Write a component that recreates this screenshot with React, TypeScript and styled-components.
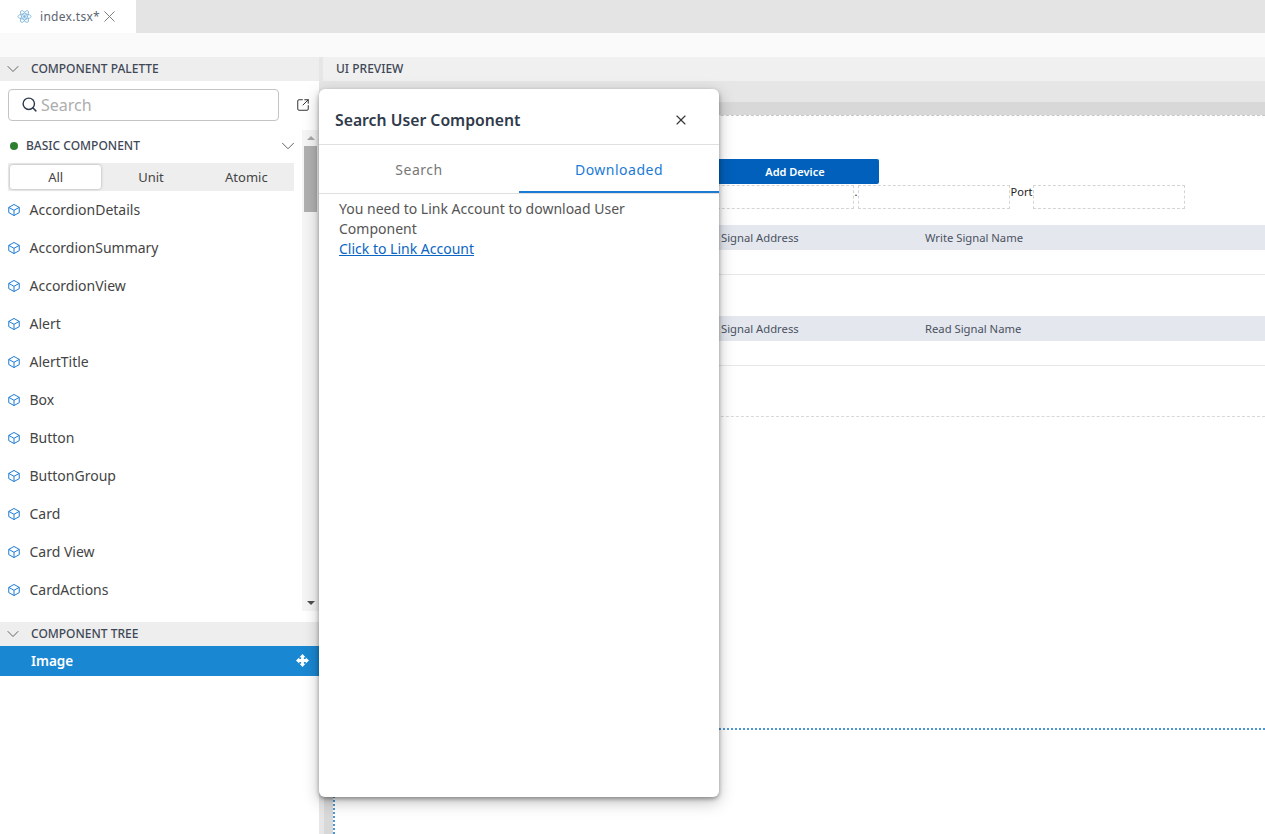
import styled, { createGlobalStyle } from "styled-components";
import { useState } from "react";
import { ChevronDown, Search, SquareArrowOutUpRight, X } from "lucide-react";

const GlobalStyle = createGlobalStyle`
  html, body {
    margin: 0;
    padding: 0;
    height: 100%;
    overflow: hidden;
    background: #fff;
    font-family: "Noto Sans", "Open Sans", sans-serif;
  }
  * { box-sizing: border-box; }
`;

const Page = styled.div`
  position: relative;
  width: 1265px;
  height: 834px;
  display: flex;
  flex-direction: column;
  overflow: hidden;
`;

const TabBar = styled.div`
  height: 33px;
  flex: none;
  display: flex;
  background: #e4e4e4;
`;

const FileTab = styled.div`
  width: 136px;
  display: flex;
  align-items: center;
  padding-left: 17px;
  gap: 8px;
  background: #fff;
  color: #5c6470;
  font-size: 12px;
  letter-spacing: 0.3px;
`;

const TabClose = styled(X)`
  margin-left: -8px;
  color: #777;
`;

const Toolbar = styled.div`
  height: 24px;
  flex: none;
  background: #fafafa;
`;

const Workspace = styled.div`
  flex: 1;
  min-height: 0;
  display: flex;
`;

const LeftColumn = styled.div`
  width: 319px;
  flex: none;
  display: flex;
  flex-direction: column;
`;

const SectionHeader = styled.div`
  height: 24px;
  flex: none;
  display: flex;
  align-items: center;
  gap: 8px;
  padding: 0 0 1px 3px;
  background: #eeeeee;
  color: #3f4856;
  font-size: 12px;
  font-weight: 500;
`;

const PalettePanel = styled.div`
  height: 554px;
  flex: none;
  display: flex;
  flex-direction: column;
`;

const SearchRow = styled.div`
  height: 49px;
  flex: none;
  display: flex;
  align-items: center;
  justify-content: space-between;
  padding: 0 9px 1px 8px;
`;

const SearchBox = styled.div`
  width: 271px;
  height: 32px;
  display: flex;
  align-items: center;
  gap: 3px;
  padding: 0 0 1px 12px;
  border: 1px solid #c4c4c4;
  border-radius: 4px;
  color: #adadad;
  font-size: 16px;
`;

const SearchGlyph = styled(Search)`
  color: #2e3a4a;
`;

const PaletteBody = styled.div`
  flex: 1;
  min-height: 0;
  display: flex;
`;

const PaletteMain = styled.div`
  width: 302px;
  flex: none;
  display: flex;
  flex-direction: column;
`;

const GroupRow = styled.div`
  height: 33px;
  flex: none;
  display: flex;
  align-items: center;
  padding: 0 3px 2px 10px;
  color: #3f4856;
  font-size: 12px;
  font-weight: 500;
`;

const GreenDot = styled.span`
  width: 8px;
  height: 8px;
  border-radius: 50%;
  background: #2e7d32;
  margin-right: 8px;
`;

const GroupChevron = styled(ChevronDown)`
  margin-left: auto;
  color: #555;
`;

const Segmented = styled.div`
  margin-left: 8px;
  width: 286px;
  height: 28px;
  flex: none;
  display: grid;
  grid-template-columns: repeat(3, 1fr);
  background: #eeeeee;
`;

const Segment = styled.button<{ $active?: boolean }>`
  margin: 2px;
  border: 0;
  padding: 0;
  border-radius: 3px;
  background: ${(p) => (p.$active ? "#fff" : "transparent")};
  box-shadow: ${(p) => (p.$active ? "0 0 3px rgba(0,0,0,0.3)" : "none")};
  color: #444;
  font: inherit;
  font-size: 13px;
`;

const ItemList = styled.div`
  flex: 1;
  min-height: 0;
  overflow: hidden;
`;

const Item = styled.div`
  height: 38px;
  display: flex;
  align-items: center;
  gap: 8.5px;
  padding: 0 0 1px 7px;
  color: #444;
  font-size: 14px;
`;

const ScrollTrack = styled.div`
  width: 17px;
  flex: none;
  display: flex;
  flex-direction: column;
  align-items: center;
  background: #f5f5f5;
`;

const ScrollArrow = styled.span<{ $up?: boolean }>`
  width: 0;
  height: 0;
  margin: 6px 0;
  border-left: 4px solid transparent;
  border-right: 4px solid transparent;
  ${(p) =>
    p.$up
      ? "border-bottom: 4px solid #a8a8a8;"
      : "border-top: 4px solid #505050;"}
`;

const ScrollThumb = styled.div`
  width: 13px;
  height: 66px;
  background: #b0b0b0;
`;

const ScrollGap = styled.div`
  flex: 1;
`;

const TreeHeader = styled(SectionHeader)`
  margin-top: 11px;
`;

const TreeRow = styled.div`
  height: 30px;
  flex: none;
  display: flex;
  align-items: center;
  justify-content: space-between;
  padding: 0 10px 1px 31px;
  background: #1a87d2;
  color: #fff;
  font-size: 13.5px;
  font-weight: 600;
`;

const Splitter = styled.div`
  width: 4px;
  flex: none;
  background: #e6e6e6;
`;

const RightColumn = styled.div`
  flex: 1;
  min-width: 0;
  display: flex;
  flex-direction: column;
`;

const PreviewHeader = styled.div`
  height: 24px;
  flex: none;
  display: flex;
  align-items: center;
  padding: 0 0 1px 13px;
  background: #f0f0f0;
  color: #3f4856;
  font-size: 12px;
  font-weight: 500;
`;

const GreyBand = styled.div`
  height: 21px;
  flex: none;
  background: #e6e6e6;
`;

const RulerBand = styled.div`
  height: 13px;
  flex: none;
  background: #d8d8d8;
`;

const CanvasRow = styled.div`
  flex: 1;
  min-height: 0;
  display: flex;
`;

const Gutter = styled.div`
  width: 10px;
  flex: none;
  background: linear-gradient(90deg, #e6e6e6 0 1px, #d8d8d8 1px);
`;

const Canvas = styled.div`
  flex: 1;
  min-width: 0;
  border-left: 2px dotted #4a97d8;
`;

const CanvasContent = styled.div`
  height: 615px;
  border-bottom: 2px dotted #4a97d8;
  display: flex;
  flex-direction: column;
`;

const DeviceFrame = styled.div`
  height: 302px;
  flex: none;
  padding-top: 43px;
  border-top: 1px dashed #c8c8c8;
  border-bottom: 1px dashed #d8d8d8;
  display: flex;
  flex-direction: column;
`;

const ButtonRow = styled.div`
  display: flex;
  padding-left: 376px;
`;

const AddButton = styled.button`
  width: 168px;
  height: 25px;
  border: 0;
  border-radius: 2px;
  background: #0060bb;
  color: #fff;
  font: inherit;
  font-size: 11px;
  font-weight: 600;
`;

const FieldRow = styled.div`
  margin-top: 1px;
  height: 24px;
  flex: none;
  display: flex;
  padding-left: 362px;
  color: #222;
  font-size: 11px;
`;

const Field = styled.div<{ $w: number }>`
  width: ${(p) => p.$w}px;
  height: 24px;
  border: 1px dashed #d4d4d4;
`;

const FieldLabel = styled.span<{ $w: number }>`
  width: ${(p) => p.$w}px;
  line-height: 14px;
  text-align: center;
  white-space: nowrap;
`;

const TableHead = styled.div<{ $gap: number }>`
  margin-top: ${(p) => p.$gap}px;
  height: 25px;
  flex: none;
  display: grid;
  grid-template-columns: 590px 1fr;
  align-items: center;
  background: #e4e7ee;
  color: #4a5260;
  font-size: 11.25px;
`;

const HeadCell = styled.span<{ $first?: boolean }>`
  padding-left: ${(p) => (p.$first ? "386px" : "0")};
`;

const TableRow = styled.div`
  height: 25px;
  flex: none;
  border-bottom: 1px solid #e8e8e8;
`;

const Modal = styled.div`
  position: absolute;
  left: 319px;
  top: 89px;
  width: 400px;
  height: 708px;
  display: flex;
  flex-direction: column;
  background: #fff;
  border-radius: 6px;
  box-shadow: 0 2px 4px rgba(0, 0, 0, 0.35), 0 5px 16px rgba(0, 0, 0, 0.25);
`;

const ModalHeader = styled.div`
  height: 56px;
  flex: none;
  display: flex;
  align-items: center;
  justify-content: space-between;
  padding: 6px 30px 0 16px;
  border-bottom: 1px solid #e0e0e0;
`;

const ModalTitle = styled.h2`
  margin: 0;
  color: #2f3a4a;
  font-size: 15.75px;
  font-weight: 600;
`;

const ModalClose = styled(X)`
  color: #333;
`;

const ModalTabs = styled.div`
  height: 49px;
  flex: none;
  display: grid;
  grid-template-columns: 1fr 1fr;
  border-bottom: 1px solid #e0e0e0;
`;

const ModalTab = styled.button<{ $active?: boolean }>`
  border: 0;
  padding: 0;
  background: none;
  color: ${(p) => (p.$active ? "#1a7ad4" : "#777")};
  box-shadow: ${(p) => (p.$active ? "inset 0 -2px 0 #1a7ad4" : "none")};
  font: inherit;
  font-size: 14px;
  letter-spacing: 0.5px;
`;

const ModalBody = styled.div`
  padding: 5px 20px;
  color: #555;
  font-size: 14px;
  line-height: 20px;
`;

const LinkText = styled.a`
  display: block;
  color: #0a66c2;
  text-decoration: underline;
`;

const items = [
  "AccordionDetails",
  "AccordionSummary",
  "AccordionView",
  "Alert",
  "AlertTitle",
  "Box",
  "Button",
  "ButtonGroup",
  "Card",
  "Card View",
  "CardActions",
];

function ReactGlyph() {
  return (
    <svg width="15" height="15" viewBox="0 0 24 24" fill="none" stroke="#7fb6dc" strokeWidth="1.4">
      <circle cx="12" cy="12" r="1.8" fill="#7fb6dc" />
      <ellipse cx="12" cy="12" rx="10.5" ry="4.2" />
      <ellipse cx="12" cy="12" rx="10.5" ry="4.2" transform="rotate(60 12 12)" />
      <ellipse cx="12" cy="12" rx="10.5" ry="4.2" transform="rotate(120 12 12)" />
    </svg>
  );
}

function CubeGlyph() {
  return (
    <svg width="14" height="14" viewBox="0 0 24 24" fill="none" stroke="#1a7ad4" strokeWidth="1.7" strokeLinejoin="round">
      <path d="M12 2.5 21 7.5v9L12 21.5 3 16.5v-9z" />
      <path d="M3 7.5 12 12.5l9-5M12 12.5v9" />
    </svg>
  );
}

function MoveGlyph() {
  return (
    <svg width="13" height="13" viewBox="0 0 24 24" fill="#fff">
      <path d="M12 0L17.5 6H14.6V9.4H18V6.5L24 12L18 17.5V14.6H14.6V18H17.5L12 24L6.5 18H9.4V14.6H6V17.5L0 12L6 6.5V9.4H9.4V6H6.5Z" />
    </svg>
  );
}

export default function App() {
  const [group, setGroup] = useState("All");
  const [tab, setTab] = useState("Downloaded");

  return (
    <Page>
      <GlobalStyle />
      <TabBar>
        <FileTab>
          <ReactGlyph />
          index.tsx*
          <TabClose size={19} strokeWidth={1.2} />
        </FileTab>
      </TabBar>
      <Toolbar />
      <Workspace>
        <LeftColumn>
          <PalettePanel>
            <SectionHeader>
              <ChevronDown size={20} strokeWidth={1.1} color="#555" />
              COMPONENT PALETTE
            </SectionHeader>
            <SearchRow>
              <SearchBox>
                <SearchGlyph size={17} strokeWidth={2} />
                Search
              </SearchBox>
              <SquareArrowOutUpRight size={14} strokeWidth={1.7} color="#333" />
            </SearchRow>
            <PaletteBody>
              <PaletteMain>
                <GroupRow>
                  <GreenDot />
                  BASIC COMPONENT
                  <GroupChevron size={22} strokeWidth={1} />
                </GroupRow>
                <Segmented>
                  {["All", "Unit", "Atomic"].map((name) => (
                    <Segment key={name} $active={group === name} onClick={() => setGroup(name)}>
                      {name}
                    </Segment>
                  ))}
                </Segmented>
                <ItemList>
                  {items.map((name) => (
                    <Item key={name}>
                      <CubeGlyph />
                      {name}
                    </Item>
                  ))}
                </ItemList>
              </PaletteMain>
              <ScrollTrack>
                <ScrollArrow $up />
                <ScrollThumb />
                <ScrollGap />
                <ScrollArrow />
              </ScrollTrack>
            </PaletteBody>
          </PalettePanel>
          <TreeHeader>
            <ChevronDown size={20} strokeWidth={1.1} color="#555" />
            COMPONENT TREE
          </TreeHeader>
          <TreeRow>
            Image
            <MoveGlyph />
          </TreeRow>
        </LeftColumn>
        <Splitter />
        <RightColumn>
          <PreviewHeader>UI PREVIEW</PreviewHeader>
          <GreyBand />
          <RulerBand />
          <CanvasRow>
            <Gutter />
            <Canvas>
              <CanvasContent>
                <DeviceFrame>
                  <ButtonRow>
                    <AddButton>Add Device</AddButton>
                  </ButtonRow>
                  <FieldRow>
                    <Field $w={157} />
                    <FieldLabel $w={4}>.</FieldLabel>
                    <Field $w={152} />
                    <FieldLabel $w={23}>Port</FieldLabel>
                    <Field $w={152} />
                  </FieldRow>
                  <TableHead $gap={16}>
                    <HeadCell $first>Signal Address</HeadCell>
                    <HeadCell>Write Signal Name</HeadCell>
                  </TableHead>
                  <TableRow />
                  <TableHead $gap={41}>
                    <HeadCell $first>Signal Address</HeadCell>
                    <HeadCell>Read Signal Name</HeadCell>
                  </TableHead>
                  <TableRow />
                </DeviceFrame>
              </CanvasContent>
            </Canvas>
          </CanvasRow>
        </RightColumn>
      </Workspace>
      <Modal>
        <ModalHeader>
          <ModalTitle>Search User Component</ModalTitle>
          <ModalClose size={16} strokeWidth={1.7} />
        </ModalHeader>
        <ModalTabs>
          {["Search", "Downloaded"].map((name) => (
            <ModalTab key={name} $active={tab === name} onClick={() => setTab(name)}>
              {name}
            </ModalTab>
          ))}
        </ModalTabs>
        <ModalBody>
          You need to Link Account to download User Component
          <LinkText href="#">Click to Link Account</LinkText>
        </ModalBody>
      </Modal>
    </Page>
  );
}
